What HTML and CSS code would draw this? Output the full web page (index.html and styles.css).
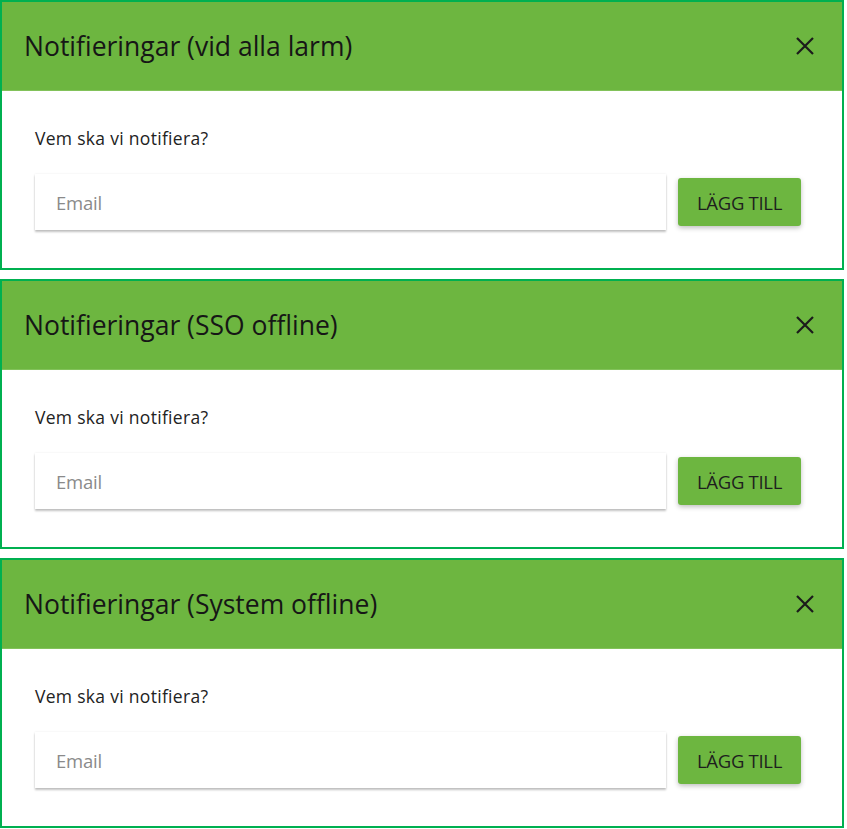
FILE: index.html
```html
<!DOCTYPE html>
<html lang="sv">
<head>
<meta charset="utf-8">
<title>Notifieringar</title>
<link rel="stylesheet" href="styles.css">
</head>
<body>
<div class="stack">
  <section class="panel">
    <header class="panel-head">
      <h2 class="panel-title">Notifieringar (vid alla larm)</h2>
      <button class="close" aria-label="Stäng"><svg viewBox="0 0 20 20" width="20" height="20"><path d="M2 2L18 18M18 2L2 18" stroke="#1b1b1b" stroke-width="2.2" fill="none"/></svg></button>
    </header>
    <div class="panel-body">
      <p class="label">Vem ska vi notifiera?</p>
      <div class="row">
        <div class="field"><span class="placeholder">Email</span></div>
        <button class="add">LÄGG TILL</button>
      </div>
    </div>
  </section>
  <section class="panel">
    <header class="panel-head">
      <h2 class="panel-title">Notifieringar (SSO offline)</h2>
      <button class="close" aria-label="Stäng"><svg viewBox="0 0 20 20" width="20" height="20"><path d="M2 2L18 18M18 2L2 18" stroke="#1b1b1b" stroke-width="2.2" fill="none"/></svg></button>
    </header>
    <div class="panel-body">
      <p class="label">Vem ska vi notifiera?</p>
      <div class="row">
        <div class="field"><span class="placeholder">Email</span></div>
        <button class="add">LÄGG TILL</button>
      </div>
    </div>
  </section>
  <section class="panel">
    <header class="panel-head">
      <h2 class="panel-title">Notifieringar (System offline)</h2>
      <button class="close" aria-label="Stäng"><svg viewBox="0 0 20 20" width="20" height="20"><path d="M2 2L18 18M18 2L2 18" stroke="#1b1b1b" stroke-width="2.2" fill="none"/></svg></button>
    </header>
    <div class="panel-body">
      <p class="label">Vem ska vi notifiera?</p>
      <div class="row">
        <div class="field"><span class="placeholder">Email</span></div>
        <button class="add">LÄGG TILL</button>
      </div>
    </div>
  </section>
</div>
</body>
</html>
```
FILE: styles.css
```css
html, body {
  margin: 0;
  padding: 0;
  background: #ffffff;
}
.stack {
  display: flex;
  flex-direction: column;
  gap: 9px;
  width: 844px;
}
.panel {
  border: 2px solid #00b050;
  height: 270px;
  box-sizing: border-box;
  background: #fff;
  display: flex;
  flex-direction: column;
}
.panel-head {
  height: 89px;
  box-sizing: border-box;
  background: #6db640;
  border-bottom: 1px solid #82c25a;
  display: flex;
  align-items: center;
  justify-content: space-between;
  padding: 0 27px 0 22px;
}
.panel-title {
  margin: 0;
  font-family: "Open Sans", "Noto Sans", sans-serif;
  font-weight: 400;
  font-size: 26.5px;
  color: #161616;
  letter-spacing: 0;
}
.close {
  background: none;
  border: 0;
  padding: 0;
  width: 20px;
  height: 20px;
  display: flex;
}
.panel-body {
  padding: 36px 41px 0 33px;
}
.label {
  margin: 0;
  font-family: "Open Sans", "Noto Sans", sans-serif;
  font-size: 17.5px;
  line-height: 22px;
  color: #222;
  letter-spacing: 0.3px;
}
.row {
  margin-top: 25px;
  display: flex;
  align-items: center;
  gap: 12px;
}
.field {
  flex: 1;
  height: 56px;
  box-sizing: border-box;
  background: #fff;
  box-shadow: 0 0 2px rgba(0,0,0,0.08), 0 2px 2px rgba(0,0,0,0.24);
  display: flex;
  align-items: center;
  padding-left: 21px;
}
.placeholder {
  font-family: "Open Sans", "Noto Sans", sans-serif;
  font-size: 18.5px;
  color: #8a8a8a;
  letter-spacing: -0.2px;
}
.add {
  width: 123px;
  height: 48px;
  border: 0;
  border-radius: 3px;
  background: #6db640;
  box-shadow: 0 2px 5px rgba(0,0,0,0.25);
  font-family: "Open Sans", "Noto Sans", sans-serif;
  font-size: 18.5px;
  color: #1e1e1e;
  letter-spacing: -0.3px;
  padding: 0;
}
```
